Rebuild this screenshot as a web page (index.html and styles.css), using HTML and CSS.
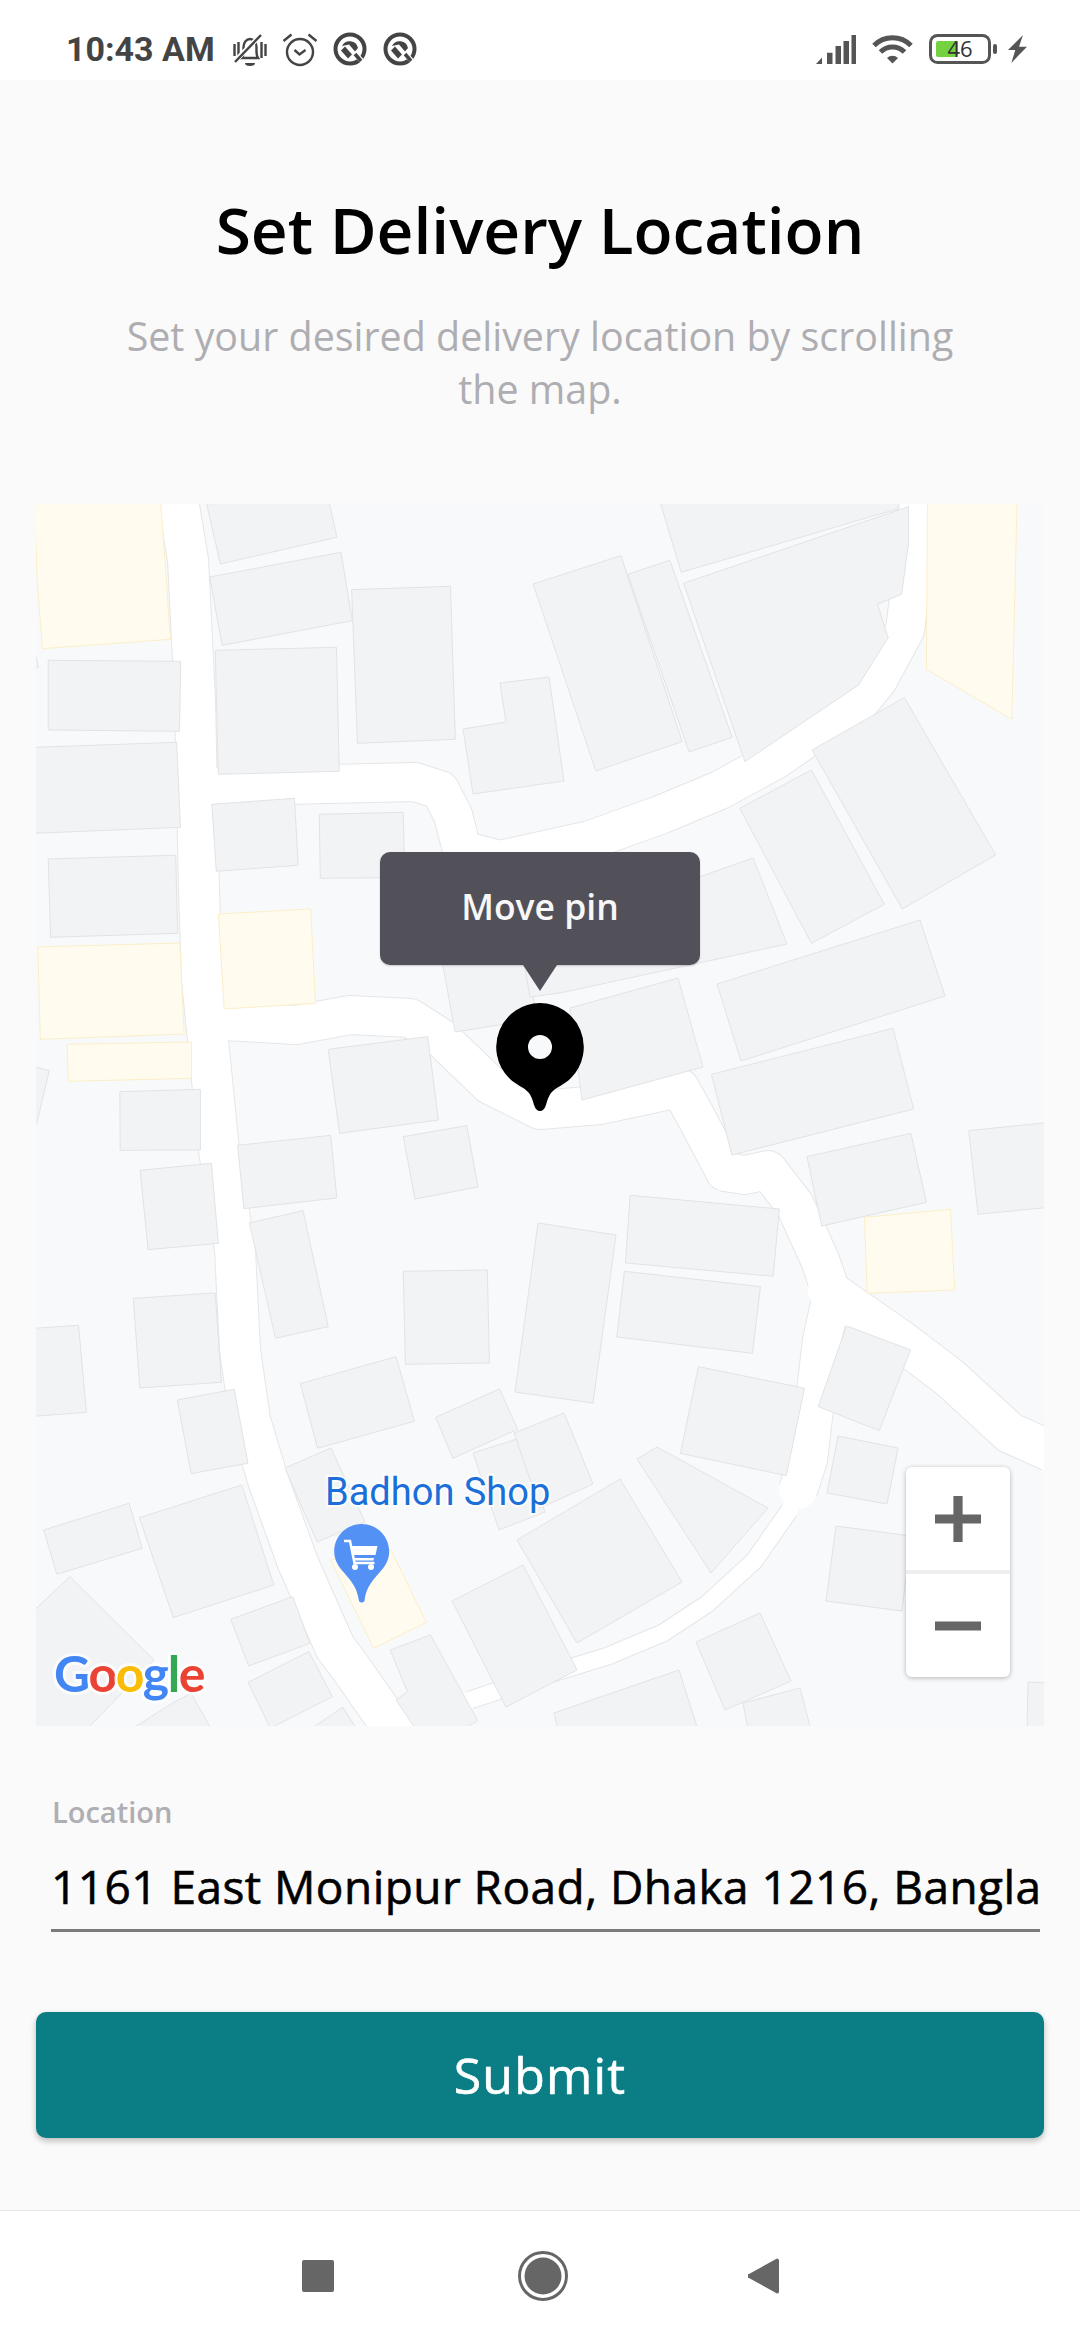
FILE: index.html
```html
<!DOCTYPE html>
<html lang="en">
<head>
  <meta charset="UTF-8">
  <title>Set Delivery Location</title>
  <link rel="stylesheet" href="styles.css">
</head>
<body>
  <div class="status-bar">
    <div class="status-left">
      <span class="time">10:43 AM</span>
      <svg class="status-icon" viewBox="0 0 36 36" width="36" height="36">
        <path class="line" d="M10 27c2-3 1.500-6 1.500-11 0-4.500 3-8 6.500-8s6.500 3.500 6.500 8c0 5-.500 8 1.500 11z"/>
        <path class="line" d="M2.500 13v12M6.500 11v16M29.500 11v16M33.500 13v12"/>
        <path class="dark" d="M13 32h10a5 3 0 0 1-10 0z"/>
        <path class="gap" d="M30 3 3 30"/>
        <path class="line" d="M29 4 3 31"/>
      </svg>
      <svg class="status-icon" viewBox="0 0 36 36" width="36" height="36">
        <circle class="line" cx="18" cy="21" r="13"/>
        <path class="line" d="M1.500 10 9.500 3.500M26.500 3.500 34.500 10M12.500 19l5 4.500 6-4.500"/>
      </svg>
      <svg class="status-icon" viewBox="0 0 36 36" width="36" height="36">
        <circle class="ring" cx="18" cy="18" r="14.500"/>
        <path class="gap" d="M24 24l8 8"/>
        <path class="ring-tail" d="M23 23l6 7"/>
        <path class="dark" d="M10 15a8.500 8.500 0 0 1 16 2l-3 3.500-6-7zM9 19.500l4-4 7 8-4 4z"/>
      </svg>
      <svg class="status-icon" viewBox="0 0 36 36" width="36" height="36">
        <circle class="ring" cx="18" cy="18" r="14.500"/>
        <path class="gap" d="M24 24l8 8"/>
        <path class="ring-tail" d="M23 23l6 7"/>
        <path class="dark" d="M10 15a8.500 8.500 0 0 1 16 2l-3 3.500-6-7zM9 19.500l4-4 7 8-4 4z"/>
      </svg>
    </div>
    <div class="status-right">
      <svg viewBox="0 0 40 29" width="40" height="29">
        <path class="grey" d="M0 29l6-6.500V29zM11 17.700h5.500V29H11zM19.500 11H25v18h-5.500zM27.500 6H33v23h-5.500zM35.500 0H40v29h-4.500z"/>
      </svg>
      <svg viewBox="0 0 41 30" width="41" height="30">
        <path class="wifi" d="M2 11.500a26 26 0 0 1 37 0M8.500 18a17 17 0 0 1 24 0"/>
        <path class="grey" d="M20.500 29.500 15 24a8 8 0 0 1 11 0z"/>
      </svg>
      <svg viewBox="0 0 68 30" width="68" height="30">
        <rect class="batt-body" x="1.500" y="1.500" width="59" height="27" rx="7"/>
        <rect class="batt-fill" x="7" y="7" width="22" height="16" rx="2"/>
        <text class="batt-text" x="31" y="23">46</text>
        <rect class="grey" x="64" y="10" width="4" height="10" rx="2"/>
      </svg>
      <svg class="bolt" viewBox="0 0 19 28" width="19" height="28">
        <path class="grey" d="M15 0 0 15h7.300L3.300 28 19 11.700h-8z"/>
      </svg>
    </div>
  </div>

  <div class="main">
    <h1 class="title">Set Delivery Location</h1>
    <p class="subtitle">Set your desired delivery location by scrolling the map.</p>

    <div class="map">
      <svg class="map-svg" viewBox="36 504 1008 1222" width="1008" height="1222">
        <defs>
          <path id="roadA" d="M178 500 188 560 195 700 199 890 202 980 219 1150 235 1250 240 1350 250 1420 268 1480 298 1563 335 1647 350 1667 394 1730"/>
          <path id="roadB" d="M200 787 415 782 440 790 453 815 462 850 500 860 590 840 660 815 720 790 775 760 860 702 878 680 905 630 915 550 917 500"/>
          <path id="roadC" d="M205 1020 296 1025 350 1015 410 1018 440 1037 490 1085 540 1110 600 1105 680 1088 695 1115 725 1172 745 1175 768 1170 795 1205 820 1260 832 1295 822 1340 815 1400 808 1460 798 1490"/>
          <path id="roadD" d="M828 1290 900 1340 950 1378 1010 1433 1050 1451"/>
          <path id="roadE" d="M789 1511 754 1561 707 1604 663 1633 608 1656 530 1680 470 1700"/>
        </defs>

        <!-- roads: edge first, then white on top -->
        <g class="road-edge">
          <use href="#roadA" stroke-width="42"/>
          <use href="#roadB" stroke-width="40"/>
          <use href="#roadC" stroke-width="40"/>
          <use href="#roadD" stroke-width="42"/>
          <use href="#roadE" stroke-width="19"/>
        </g>
        <g class="road-fill">
          <use href="#roadA" stroke-width="40"/>
          <use href="#roadB" stroke-width="38"/>
          <use href="#roadC" stroke-width="38"/>
          <use href="#roadD" stroke-width="40"/>
          <use href="#roadE" stroke-width="17"/>
        </g>

        <g transform="translate(0 480) scale(.3444 .3333)">
          <polygon class="yel" points="100,71 467,71 495,478 123,506 108,300"/>
          <polygon class="bld" points="600,71 957,71 978,172 640,252"/>
          <polygon class="bld" points="609,291 990,217 1023,422 645,496"/>
          <polygon class="bld" points="625,511 977,502 985,874 634,883"/>
          <polygon class="bld" points="1021,329 1308,319 1322,778 1038,790"/>
          <polygon class="bld" points="140,541 525,544 521,754 140,750"/>
          <polygon class="bld" points="100,802 513,787 524,1042 100,1060"/>
          <polygon class="bld" points="140,1137 510,1126 516,1360 147,1372"/>
          <polygon class="bld" points="615,973 855,955 866,1156 628,1174"/>
          <polygon class="bld" points="927,1003 1171,997 1175,1193 930,1195"/>
          <polygon class="bld" points="100,515 112,562 100,566"/>
        </g>

        <g transform="translate(540 480) scale(.3444 .3333)">
          <polygon class="bld" points="347,60 1040,60 1043,85 410,277"/>
          <polygon class="bld" points="-20,312 235,227 413,785 162,873"/>
          <polygon class="bld" points="255,283 377,241 558,772 433,816"/>
          <polygon class="bld" points="417,310 1070,80 1070,190 1050,343 980,372 1011,473 925,615 595,845"/>
          <polygon class="bld" points="790,810 1058,653 1323,1125 1052,1287"/>
          <polygon class="bld" points="580,985 788,870 1000,1273 788,1390"/>
          <polygon class="yel" points="1125,71 1385,71 1370,718 1122,568"/>
        </g>

        <g transform="translate(0 980) scale(.3444 .3333)">
          <polygon class="yel" points="110,-99 522,-111 535,162 117,178"/>
          <polygon class="yel" points="634,-198 902,-213 916,70 651,87"/>
          <polygon class="yel" points="195,193 556,186 556,295 198,304"/>
          <polygon class="bld" points="100,260 143,272 107,430 100,430"/>
          <polygon class="bld" points="348,335 582,328 582,510 349,511"/>
          <polygon class="bld" points="407,571 614,550 634,790 430,809"/>
          <polygon class="bld" points="387,955 625,939 643,1207 406,1224"/>
          <polygon class="bld" points="100,1045 228,1036 251,1297 100,1309"/>
          <polygon class="bld" points="515,1260 680,1228 720,1450 555,1481"/>
          <polygon class="bld" points="690,496 960,466 978,654 708,686"/>
          <polygon class="bld" points="953,208 1242,170 1273,420 986,460"/>
          <polygon class="bld" points="1171,470 1355,437 1388,621 1205,657"/>
          <polygon class="bld" points="724,729 880,692 953,1040 800,1075"/>
          <polygon class="bld" points="1171,874 1415,870 1421,1149 1177,1153"/>
          <polygon class="bld" points="872,1211 1150,1130 1203,1324 922,1405"/>
          <polygon class="bld" points="1265,1312 1450,1227 1503,1348 1315,1435"/>
        </g>

        <g transform="translate(540 980) scale(.3444 .3333)">
          <polygon class="bld" points="498,283 1025,145 1085,387 557,525"/>
          <polygon class="bld" points="775,530 1077,460 1122,667 818,738"/>
          <polygon class="bld" points="1245,452 1470,428 1470,683 1272,703"/>
          <polygon class="yel" points="942,712 1192,688 1204,930 950,940"/>
          <polygon class="bld" points="262,646 695,687 677,889 248,849"/>
          <polygon class="bld" points="245,874 640,920 617,1120 223,1071"/>
          <polygon class="bld" points="460,1160 768,1225 715,1487 408,1420"/>
          <polygon class="bld" points="890,1038 1076,1110 985,1352 808,1280"/>
        </g>

        <g transform="translate(0 1480) scale(.3444 .3333)">
          <polygon class="bld" points="127,150 375,70 413,205 165,283"/>
          <polygon class="bld" points="405,113 702,15 795,315 503,413"/>
          <polygon class="bld" points="670,418 850,350 900,490 722,558"/>
          <polygon class="bld" points="720,607 897,515 965,650 785,745"/>
          <polygon class="bld" points="905,745 995,682 1035,745"/>
          <polygon class="bld" points="100,390 203,290 447,540 255,745 100,745"/>
          <polygon class="bld" points="385,745 500,670 555,640 612,745"/>
          <polygon class="yel" points="960,240 1135,210 1238,427 1085,505"/>
          <polygon class="bld" points="1133,510 1250,465 1387,722 1350,745 1205,745 1150,660 1183,635"/>
        </g>

        <!-- these are already in page pixels -->
        <polygon class="bld" points="463,729 506,722 500,683 549,677 564,781 473,794"/>
        <polygon class="bld" points="442,960 455,1032 537,1019 525,945"/>
        <polygon class="bld" points="520,940 753,858 787,944 560,993 530,997"/>
        <polygon class="bld" points="717,984 920,920 945,996 741,1061"/>
        <polygon class="bld" points="570,1008 678,978 703,1067 582,1100"/>
        <polygon class="bld" points="538,1223 616,1235 593,1403 515,1392"/>
        <polygon class="bld" points="285,1468 331,1448 365,1522 317,1542"/>
        <polygon class="bld" points="838,1436 898,1448 887,1504 827,1493"/>
        <polygon class="bld" points="473,1453 520,1438 545,1512 499,1530"/>
        <polygon class="bld" points="514,1433 564,1413 593,1484 540,1508"/>
        <polygon class="bld" points="637,1459 657,1447 768,1508 711,1573"/>
        <polygon class="bld" points="452,1601 523,1565 577,1670 506,1707"/>
        <polygon class="bld" points="517,1540 620,1479 682,1582 577,1643"/>
        <polygon class="bld" points="836,1526 911,1536 902,1611 826,1601"/>
        <polygon class="bld" points="696,1642 760,1613 791,1681 725,1710"/>
        <polygon class="bld" points="743,1703 800,1688 811,1730 748,1730"/>
        <polygon class="bld" points="554,1713 679,1670 698,1730 558,1730"/>
        <polygon class="bld" points="1028,1682 1050,1683 1050,1730 1027,1730"/>

        <text class="place-label" x="325" y="1505">Badhon Shop</text>
        <path class="place-pin" d="M361.600 1524c-15.200 0-27.400 12.300-27.400 27.500 0 20 21 24 24.500 48a3 3 0 0 0 6 0c3.500-24 24.500-28 24.500-48 0-15.200-12.300-27.500-27.600-27.500z"/>
        <path class="cart-line" d="M344 1541h6l4.500 22h20"/>
        <path class="cart-fill" d="M351.500 1546h26l-2 9h-22zM353.500 1558h20.500l-.6 2.500h-19.400z"/>
        <circle class="cart-fill" cx="355" cy="1567" r="3"/>
        <circle class="cart-fill" cx="371" cy="1567" r="3"/>

        <text class="google" x="54" y="1692"><tspan fill="#4285f4">G</tspan><tspan fill="#ea4335">o</tspan><tspan fill="#fbbc05">o</tspan><tspan fill="#4285f4">g</tspan><tspan fill="#34a853">l</tspan><tspan fill="#ea4335">e</tspan></text>
      </svg>

      <div class="tooltip">Move pin</div>

      <svg class="center-pin" viewBox="0 0 88 108" width="88" height="108">
        <path fill-rule="evenodd" d="M44 0a44 44 0 0 1 31 75c-7 7-15 9-20 15q-3 4-5 12-2 6-6 6t-6-6q-2-8-5-12c-5-6-13-8-20-15A44 44 0 0 1 44 0zm0 32a12 12 0 1 0 0 24 12 12 0 0 0 0-24z"/>
      </svg>

      <div class="zoom-ctrl">
        <div class="zoom-btn">
          <svg viewBox="0 0 46 46" width="46" height="46"><path class="zoom-sign" d="M18.400 0h9.200v18.400H46v9.200H27.600V46h-9.200V27.600H0v-9.200h18.400z"/></svg>
        </div>
        <div class="zoom-btn">
          <svg viewBox="0 0 46 46" width="46" height="46"><path class="zoom-sign" d="M0 18.400h46v9.200H0z"/></svg>
        </div>
      </div>
    </div>

    <div class="field">
      <div class="field-label">Location</div>
      <div class="field-value">1161 East Monipur Road, Dhaka 1216, Bangla</div>
    </div>

    <button class="submit" type="button">Submit</button>
  </div>

  <div class="nav-bar">
    <svg class="nav-square" viewBox="0 0 32 32" width="32" height="32"><rect class="nav-fill" width="32" height="32" rx="2"/></svg>
    <svg viewBox="0 0 50 50" width="50" height="50">
      <circle class="nav-ring" cx="25" cy="25" r="23.500"/>
      <circle class="nav-fill" cx="25" cy="25" r="18.500"/>
    </svg>
    <svg class="nav-back" viewBox="0 0 31 36" width="31" height="36"><path class="nav-fill" d="M29 .5a2 2 0 0 1 2 1.500v32a2 2 0 0 1-2 1.500L1 20a2 2 0 0 1 0-4z"/></svg>
  </div>
</body>
</html>
```

FILE: styles.css
```css
* {
  box-sizing: border-box;
}
html, body {
  margin: 0;
  padding: 0;
}
body {
  width: 1080px;
  height: 2340px;
  display: flex;
  flex-direction: column;
  background: #fafafa;
  font-family: "Open Sans", sans-serif;
  overflow: hidden;
}

/* status bar */
.status-bar {
  height: 80px;
  flex: none;
  padding: 18px 53px 0 66px;
  display: flex;
  justify-content: space-between;
  align-items: center;
  background: #fff;
}
.status-left {
  display: flex;
  align-items: center;
  gap: 14px;
}
.status-right {
  display: flex;
  align-items: center;
  gap: 16px;
}
.bolt {
  margin-left: -5px;
}
.time {
  font-family: Roboto, sans-serif;
  font-weight: 700;
  font-size: 34px;
  color: #444;
  margin-right: 3px;
}
.status-icon .line {
  fill: none;
  stroke: #444;
  stroke-width: 2.4;
}
.status-icon .gap {
  fill: none;
  stroke: #fff;
  stroke-width: 5;
}
.status-icon .dark {
  fill: #444;
}
.status-icon .ring {
  fill: none;
  stroke: #444;
  stroke-width: 4;
}
.status-icon .ring-tail {
  fill: none;
  stroke: #444;
  stroke-width: 3.5;
}
.grey {
  fill: #555;
}
.wifi {
  fill: none;
  stroke: #555;
  stroke-width: 5;
}
.batt-body {
  fill: none;
  stroke: #555;
  stroke-width: 3;
}
.batt-fill {
  fill: #74d13f;
}
.batt-text {
  font-size: 22px;
  fill: #333;
  text-anchor: middle;
}

/* main content */
.main {
  flex: 1;
  padding: 0 36px;
  background: #fafafa;
}
.title {
  margin: 106px 0 0;
  font-size: 64px;
  line-height: 88px;
  font-weight: 600;
  color: #000;
  text-align: center;
}
.subtitle {
  margin: 36px auto 0;
  max-width: 850px;
  font-size: 39.4px;
  line-height: 53px;
  color: #aeaeb2;
  text-align: center;
}

/* map */
.map {
  position: relative;
  height: 1222px;
  margin-top: 88px;
  background: #f8f9fb;
  overflow: hidden;
}
.map-svg {
  display: block;
}
.road-edge use {
  fill: none;
  stroke: #e5e6e8;
  stroke-linejoin: round;
}
.road-fill use {
  fill: none;
  stroke: #fff;
  stroke-linejoin: round;
  stroke-linecap: round;
}
.bld {
  fill: #f2f3f5;
  stroke: #e2e3e6;
  stroke-width: 1;
  vector-effect: non-scaling-stroke;
}
.yel {
  fill: #fffbef;
  stroke: #fbefc8;
  stroke-width: 1;
  vector-effect: non-scaling-stroke;
}
.place-label {
  font-family: Roboto, sans-serif;
  font-size: 38px;
  fill: #1a6fd8;
  stroke: rgba(255, 255, 255, .8);
  stroke-width: 4px;
  paint-order: stroke;
}
.place-pin {
  fill: #5491f5;
}
.cart-line {
  fill: none;
  stroke: #fff;
  stroke-width: 2.5;
}
.cart-fill {
  fill: #fff;
}
.google {
  font-family: Lato, sans-serif;
  font-size: 50px;
  font-weight: 700;
  letter-spacing: -1.5px;
  stroke: rgba(255, 255, 255, .75);
  stroke-width: 6px;
  paint-order: stroke;
}
.tooltip {
  position: absolute;
  left: 344px;
  top: 348px;
  width: 320px;
  height: 113px;
  padding-bottom: 5px;
  display: flex;
  align-items: center;
  justify-content: center;
  background: #52515a;
  border-radius: 10px;
  box-shadow: 0 1px 2px rgba(0, 0, 0, .2);
  color: #f7f7f8;
  font-size: 35.5px;
  font-weight: 600;
}
.tooltip::after {
  content: "";
  position: absolute;
  left: 143px;
  top: 113px;
  border-left: 17px solid transparent;
  border-right: 17px solid transparent;
  border-top: 26px solid #52515a;
}
.center-pin {
  position: absolute;
  left: 460px;
  top: 499px;
}
.zoom-ctrl {
  position: absolute;
  left: 870px;
  top: 963px;
  width: 104px;
  height: 210px;
  display: flex;
  flex-direction: column;
  gap: 4px;
  background: #eee;
  border-radius: 6px;
  box-shadow: 0 1px 5px rgba(0, 0, 0, .28);
  overflow: hidden;
}
.zoom-btn {
  flex: 1;
  display: flex;
  align-items: center;
  justify-content: center;
  background: #fff;
}
.zoom-sign {
  fill: #666;
}

/* location field */
.field {
  margin: 66px 4px 0 15px;
}
.field-label {
  padding-left: 1px;
  font-size: 29px;
  line-height: 40px;
  font-weight: 600;
  color: #aeaeb3;
}
.field-value {
  margin-top: 24px;
  padding-bottom: 13px;
  border-bottom: 3px solid #7b7b7b;
  font-size: 46px;
  line-height: 60px;
  letter-spacing: .45px;
  -webkit-text-stroke: .6px #000;
  color: #000;
  white-space: nowrap;
  overflow: hidden;
}
.submit {
  display: block;
  width: 100%;
  height: 126px;
  margin-top: 80px;
  border: 0;
  border-radius: 10px;
  background: #0a7e84;
  box-shadow: 0 3px 6px rgba(0, 0, 0, .25);
  color: #fff;
  font-family: "Open Sans", sans-serif;
  font-size: 50px;
  letter-spacing: 1.2px;
  -webkit-text-stroke: .6px #fff;
}

/* bottom navigation */
.nav-bar {
  height: 130px;
  flex: none;
  display: flex;
  align-items: center;
  justify-content: center;
  gap: 182px;
  background: #fff;
  border-top: 1px solid #e8e8e8;
}
.nav-square {
  margin-right: 2px;
}
.nav-back {
  margin-left: -2px;
}
.nav-fill {
  fill: #666;
}
.nav-ring {
  fill: none;
  stroke: #666;
  stroke-width: 3;
}
```
